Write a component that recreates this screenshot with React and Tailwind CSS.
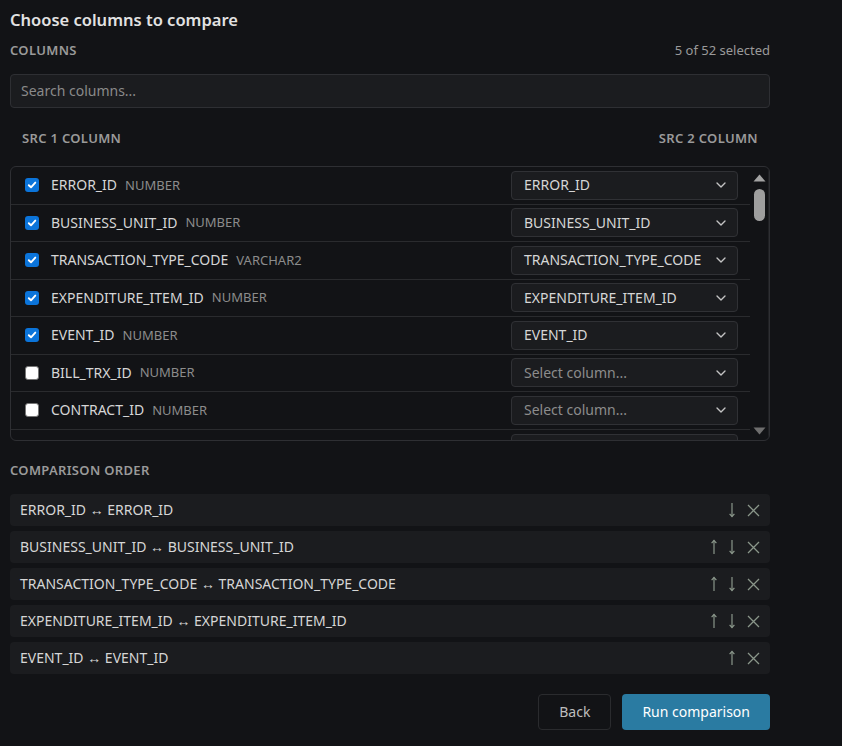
import { ChevronDown } from "lucide-react";

const FONT = "font-['Noto_Sans','Open_Sans',sans-serif]";

const COLUMNS = [
  { name: "ERROR_ID", type: "NUMBER", checked: true, match: "ERROR_ID" },
  { name: "BUSINESS_UNIT_ID", type: "NUMBER", checked: true, match: "BUSINESS_UNIT_ID" },
  { name: "TRANSACTION_TYPE_CODE", type: "VARCHAR2", checked: true, match: "TRANSACTION_TYPE_CODE" },
  { name: "EXPENDITURE_ITEM_ID", type: "NUMBER", checked: true, match: "EXPENDITURE_ITEM_ID" },
  { name: "EVENT_ID", type: "NUMBER", checked: true, match: "EVENT_ID" },
  { name: "BILL_TRX_ID", type: "NUMBER", checked: false, match: "" },
  { name: "CONTRACT_ID", type: "NUMBER", checked: false, match: "" },
];

const ORDER = [
  "ERROR_ID",
  "BUSINESS_UNIT_ID",
  "TRANSACTION_TYPE_CODE",
  "EXPENDITURE_ITEM_ID",
  "EVENT_ID",
];

function Checkbox({ checked }) {
  if (checked) {
    return (
      <span className="flex h-[14px] w-[14px] shrink-0 items-center justify-center rounded-[3px] bg-[#0b74da]">
        <svg width="10" height="10" viewBox="0 0 10 10" fill="none">
          <path d="M1.8 5.2 L4 7.3 L8.3 2.6" stroke="#fff" strokeWidth="1.9" strokeLinecap="round" strokeLinejoin="round" />
        </svg>
      </span>
    );
  }
  return <span className="h-[14px] w-[14px] shrink-0 rounded-[3px] border border-[#767676] bg-white" />;
}

function ArrowUp() {
  return (
    <svg width="8" height="16" viewBox="0 0 8 16" fill="none" stroke="#8a968a" strokeWidth="1.2">
      <path d="M4 1.5 V15" />
      <path d="M1.6 4.2 L4 1.5 L6.4 4.2" />
    </svg>
  );
}

function ArrowDown() {
  return (
    <svg width="8" height="16" viewBox="0 0 8 16" fill="none" stroke="#8a968a" strokeWidth="1.2">
      <path d="M4 1 V14.5" />
      <path d="M1.6 11.8 L4 14.5 L6.4 11.8" />
    </svg>
  );
}

function CloseIcon() {
  return (
    <svg width="13" height="13" viewBox="0 0 13 13" fill="none" stroke="#8a968a" strokeWidth="1.3">
      <path d="M1 1 L12 12 M12 1 L1 12" />
    </svg>
  );
}

function ColumnRow({ col }) {
  return (
    <div className="flex h-[37.5px] shrink-0 items-center justify-between border-b border-[#2a2b2e] pl-[14px] pr-3">
      <div className="flex items-center">
        <Checkbox checked={col.checked} />
        <span className="ml-3 text-sm text-[#d6d6d6]">{col.name}</span>
        <span className="ml-2 text-[13px] text-[#8c8c8c]">{col.type}</span>
      </div>
      <div className="flex h-[29px] w-[227px] items-center justify-between rounded-[4px] border border-[#303135] bg-[#1b1c1f] pl-3 pr-2">
        <span className={`text-sm ${col.match ? "text-[#d6d6d6]" : "text-[#8c8c8c]"}`}>
          {col.match || "Select column..."}
        </span>
        <ChevronDown size={16} strokeWidth={2} className="text-[#c4c4c4]" />
      </div>
    </div>
  );
}

// Partly scrolled-in row at the bottom of the list: only the select's top edge shows.
function PeekRow() {
  return (
    <div className="flex h-[37.5px] shrink-0 items-center justify-end pr-3">
      <div className="h-[29px] w-[227px] rounded-[4px] border border-[#303135] bg-[#1b1c1f]" />
    </div>
  );
}

function OrderItem({ name, first, last }) {
  return (
    <div className="flex h-8 items-center justify-between rounded-[4px] bg-[#1b1c1f] pl-2.5 pr-2.5">
      <span className="text-sm text-[#d6d6d6]">
        {name} ↔ {name}
      </span>
      <div className="flex items-center">
        {!first && (
          <span className="flex w-[18px] justify-center">
            <ArrowUp />
          </span>
        )}
        {!last && (
          <span className="flex w-[18px] justify-center">
            <ArrowDown />
          </span>
        )}
        <span className="ml-[5px] flex w-[14px] justify-center">
          <CloseIcon />
        </span>
      </div>
    </div>
  );
}

export default function App() {
  return (
    <div className={`min-h-screen bg-[#121316] ${FONT}`}>
      <div className="w-[780px] px-[10px] pt-[6px]">
        <h2 className="text-[16.5px] font-semibold leading-7 text-[#e2e2e2]">Choose columns to compare</h2>

        <div className="mt-2 flex items-center justify-between leading-4">
          <span className="text-[13px] font-semibold tracking-wide text-[#9a9a9a]">COLUMNS</span>
          <span className="text-[13px] text-[#9a9a9a]">5 of 52 selected</span>
        </div>

        <div className="mt-4 flex h-[34px] items-center rounded-[4px] border border-[#2e2f33] bg-[#1b1c1f] px-2.5">
          <span className="text-sm text-[#8a8a8a]">Search columns...</span>
        </div>

        <div className="mt-[22px] flex items-center justify-between px-3 leading-4">
          <span className="text-[13px] font-semibold tracking-wide text-[#9a9a9a]">SRC 1 COLUMN</span>
          <span className="text-[13px] font-semibold tracking-wide text-[#9a9a9a]">SRC 2 COLUMN</span>
        </div>

        <div className="mt-5 flex h-[275px] overflow-hidden rounded-md border border-[#2e2f33]">
          <div className="flex flex-1 flex-col overflow-hidden">
            {COLUMNS.map((col) => (
              <ColumnRow key={col.name} col={col} />
            ))}
            <PeekRow />
          </div>
          <div className="flex w-[19px] shrink-0 flex-col items-center border-r border-[#1f2023] pt-[7px] pb-[5px]">
            <svg width="13" height="8" viewBox="0 0 13 8">
              <path d="M0.5 7.5 L6.5 0.5 L12.5 7.5 Z" fill="#a3a3a3" />
            </svg>
            <span className="mt-[7px] h-[32px] w-[11px] rounded-full bg-[#9e9e9e]" />
            <span className="flex-1" />
            <svg width="13" height="8" viewBox="0 0 13 8">
              <path d="M0.5 0.5 L6.5 7.5 L12.5 0.5 Z" fill="#6e6e6e" />
            </svg>
          </div>
        </div>

        <div className="mt-[20px] leading-4">
          <span className="text-[13px] font-semibold tracking-wide text-[#9a9a9a]">COMPARISON ORDER</span>
        </div>

        <div className="mt-4 flex flex-col gap-[5px]">
          {ORDER.map((name, i) => (
            <OrderItem key={name} name={name} first={i === 0} last={i === ORDER.length - 1} />
          ))}
        </div>

        <div className="mt-5 flex justify-end gap-[11px]">
          <button className="h-9 rounded-[4px] border border-[#2a2b2e] px-5 text-sm text-[#bdbdbd]">Back</button>
          <button className="h-9 rounded-[4px] bg-[#2a7ba2] px-5 text-sm text-white">Run comparison</button>
        </div>
      </div>
    </div>
  );
}
